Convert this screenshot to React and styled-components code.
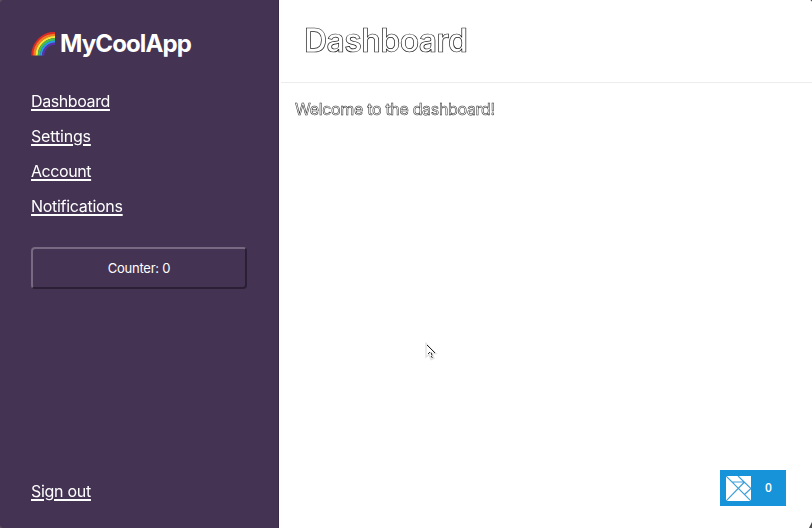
import React from "react";
import styled, { createGlobalStyle } from "styled-components";

const GlobalStyle = createGlobalStyle`
  * { box-sizing: border-box; }
  body { margin: 0; background: #000; font-family: Inter, "Liberation Sans", sans-serif; }
`;

const Window = styled.div`
  position: relative;
  display: flex;
  width: 812px;
  height: 528px;
  overflow: hidden;
  border-radius: 2px;
  background: #fff;
`;

const Sidebar = styled.aside`
  display: flex;
  flex-direction: column;
  flex: none;
  width: 279px;
  padding: 28px 31px 25px;
  border-right: 1px solid #392b46;
  background: #443353;
  color: #fff;
`;

const Brand = styled.div`
  display: flex;
  align-items: center;
  gap: 4px;
  height: 32px;
  font-size: 24px;
  font-weight: 700;
  line-height: 32px;
  letter-spacing: -0.88px;
`;

const RainbowIcon = styled.svg`
  flex: none;
  width: 25px;
  height: 25px;
`;

const Nav = styled.nav`
  display: flex;
  flex-direction: column;
  align-items: flex-start;
  gap: 11px;
  margin-top: 29px;
`;

const NavLink = styled.a`
  align-self: flex-start;
  font-size: 16px;
  line-height: 24px;
  letter-spacing: ${(p) => p.$tracking};
  color: #fff;
  text-decoration: underline;
  text-decoration-thickness: 1.5px;
  text-underline-offset: 2px;
  will-change: transform;
`;

const CounterButton = styled.button`
  width: 216px;
  height: 42px;
  margin-top: 29px;
  padding: 0;
  border: 2px solid;
  border-color: #776a82 #2b1f36 #2b1f36 #776a82;
  border-radius: 4px;
  background: transparent;
  color: #fff;
  font: 400 13px/20px Inter, "Liberation Sans", sans-serif;
  letter-spacing: -0.25px;
`;

const Spacer = styled.div`
  flex: 1;
`;

const Main = styled.main`
  flex: 1;
  display: flex;
  flex-direction: column;
`;

const Header = styled.header`
  height: 83px;
  margin-left: 2px;
  padding: 21px 23px;
  border-bottom: 1px solid #ececec;
`;

const Title = styled.h1`
  margin: 0;
  font-size: 32px;
  font-weight: 600;
  line-height: 40px;
  letter-spacing: -0.6px;
  color: #fff;
  -webkit-text-stroke: 0.7px #222;
  will-change: transform;
`;

const Message = styled.p`
  margin: 0;
  padding: 14px 16px;
  font-size: 16px;
  line-height: 24px;
  letter-spacing: -0.32px;
  color: #fff;
  -webkit-text-stroke: 0.5px #222;
  will-change: transform;
`;

const Badge = styled.div`
  position: absolute;
  left: 720px;
  top: 470px;
  display: flex;
  align-items: center;
  width: 66px;
  height: 36px;
  padding-left: 6px;
  background: #1693d9;
  color: #fff;
`;

const BadgeCount = styled.span`
  width: 35px;
  text-align: center;
  font: 600 12px/16px "Open Sans", sans-serif;
`;

const Cursor = styled.svg`
  position: absolute;
  left: 424px;
  top: 342px;
`;

const Corner = styled.svg`
  position: absolute;
  right: 0;
  bottom: 0;
`;

const arcs = [
  ["#dc2b25", 22.6],
  ["#f47b20", 20.6],
  ["#f9e43b", 18.4],
  ["#45bd48", 16],
  ["#2799e8", 13.8],
  ["#5632ae", 11.8],
];

function Rainbow() {
  return (
    <RainbowIcon viewBox="0 0 25 25">
      {arcs.map(([color, r]) => (
        <path
          key={color}
          d={`M${24 - r} 23.5A${r} ${r} 0 0 1 24 ${23.5 - r}`}
          fill="none"
          stroke={color}
          strokeWidth="2.3"
        />
      ))}
    </RainbowIcon>
  );
}

function Tangram() {
  return (
    <svg width="25" height="25" viewBox="0 0 25 25">
      <path fill="#fff" d="M0 0h25v25H0z" />
      <path
        d="M0 0L25 25M0 25L18.5 6M12 0L25 12.5M6 6H18.5M18.5 18.5L25 12.5"
        fill="none"
        stroke="#3c9fd9"
        strokeWidth="1.2"
      />
    </svg>
  );
}

const links = [
  ["Dashboard", "-0.4px"],
  ["Settings", "-0.18px"],
  ["Account", "-0.42px"],
  ["Notifications", "-0.29px"],
];

export default function App() {
  return (
    <>
      <GlobalStyle />
      <Window>
        <Sidebar>
          <Brand>
            <Rainbow />
            <span>MyCoolApp</span>
          </Brand>
          <Nav>
            {links.map(([label, tracking]) => (
              <NavLink key={label} $tracking={tracking}>{label}</NavLink>
            ))}
          </Nav>
          <CounterButton>Counter: 0</CounterButton>
          <Spacer />
          <NavLink $tracking="-0.28px">Sign out</NavLink>
        </Sidebar>
        <Main>
          <Header>
            <Title>Dashboard</Title>
          </Header>
          <Message>Welcome to the dashboard!</Message>
        </Main>
        <Badge>
          <Tangram />
          <BadgeCount>0</BadgeCount>
        </Badge>
        <Cursor width="16" height="20" viewBox="0 0 16 20">
          <path
            d="M2 1.5V15l3-2.5 2 5 3-1.2-2-4.8h4z"
            fill="#fff"
            stroke="#e2e2e2"
            strokeWidth="1.4"
          />
          <path
            d="M3 3l8 8M4 12l2-2M7 10.5l1 3M7 14l1.5 2"
            fill="none"
            stroke="#222"
            strokeWidth="1"
          />
        </Cursor>
        <Corner width="3" height="6">
          <path d="M3 0V6H0z" fill="#444" />
        </Corner>
      </Window>
    </>
  );
}
